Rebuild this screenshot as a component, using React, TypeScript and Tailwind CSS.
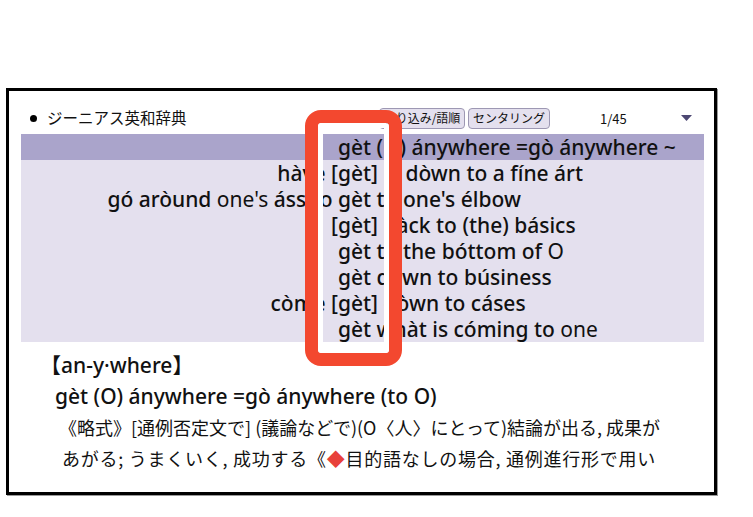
import React from "react";

const FONT = "font-['Noto_Sans','Noto_Sans_CJK_JP',sans-serif]";
const JP = "font-['Noto_Sans_CJK_JP',sans-serif]";

type Row = { left: React.ReactNode; right: React.ReactNode; hi?: boolean };

const rows: Row[] = [
  { left: "", right: "gèt (O) ánywhere =gò ánywhere ~", hi: true },
  { left: "hàve [", right: "gèt] O dòwn to a fíne árt" },
  {
    left: (
      <>
        gó aròund <span className="font-normal">one's</span> áss to{" "}
      </>
    ),
    right: "gèt to one's élbow",
  },
  { left: "[", right: "gèt] bàck to (the) básics" },
  {
    left: "",
    right: (
      <>
        gèt to the bóttom of <span className="font-normal">O</span>
      </>
    ),
  },
  { left: "", right: "gèt dòwn to búsiness" },
  { left: "còme [", right: "gèt] dòwn to cáses" },
  {
    left: "",
    right: (
      <>
        gèt whàt is cóming to <span className="font-normal">one</span>
      </>
    ),
  },
];

export default function App() {
  return (
    <div className={`relative w-[753px] h-[517px] bg-white text-[#111] ${FONT}`}>
      <div className="pt-[88px] pl-[6px]">
        <div className="w-[711px] h-[407px] border-[3px] border-black shadow-[1px_1px_0_#9a9a9a] flex flex-col">
          {/* header */}
          <div className={`h-[43px] pt-[11px] flex items-center ${JP}`}>
            <div className="w-[370px] flex items-center pl-[21px]">
              <span className="w-[7px] h-[7px] rounded-full bg-black"></span>
              <span className="ml-[10px] text-[15.5px] leading-none whitespace-nowrap">ジーニアス英和辞典</span>
            </div>
            <div className="h-[21px] w-[86px] rounded-[4px] border border-[#9d98b3] bg-[#e4e0ee] flex items-center justify-center text-[12px] leading-none whitespace-nowrap">
              絞り込み/語順
            </div>
            <div className="ml-[3px] h-[21px] w-[82px] rounded-[4px] border border-[#9d98b3] bg-[#e4e0ee] flex items-center justify-center text-[12px] leading-none whitespace-nowrap">
              センタリング
            </div>
            <div className="ml-[50px] text-[13px] leading-none">1/45</div>
            <svg className="ml-[54px]" width="11" height="7" viewBox="0 0 11 7">
              <polygon points="0,0 11,0 5.5,6" fill="#4d4873" />
            </svg>
          </div>
          {/* list */}
          <div className="ml-[12px] mr-[10px] bg-[#e4e0ee] text-[21px] font-medium">
            {rows.map((r, i) => (
              <div
                key={i}
                className={`h-[26px] flex items-center whitespace-nowrap leading-none ${r.hi ? "bg-[#aaa4cb]" : ""}`}
              >
                <div className="w-[317px] shrink-0 text-right whitespace-pre">{r.left}</div>
                <div className="whitespace-pre">{r.right}</div>
              </div>
            ))}
          </div>
          {/* entry */}
          <div className="pt-[8px] text-[21px] leading-[31px]">
            <div className="pl-[31px] font-medium">【an-y·where】</div>
            <div className="pl-[46px] font-medium">gèt (O) ánywhere =gò ánywhere (to O)</div>
            <div className={`pl-[50px] text-[18px] ${JP}`}>《略式》[通例否定文で] (議論などで)(O〈人〉にとって)結論が出る, 成果が</div>
            <div className={`pl-[53px] text-[18px] tracking-[0.75px] ${JP}`}>
              あがる; うまくいく, 成功する《<span className="text-[#e8413a]">◆</span>目的語なしの場合, 通例進行形で用い
            </div>
          </div>
        </div>
      </div>
      {/* red highlight frame */}
      <div className="absolute left-[305px] top-[110px] w-[97px] h-[256px] rounded-[16px] border-[13px] border-[#f3482f]">
        <div className="w-full h-full rounded-[4px] border-[5px] border-white"></div>
      </div>
    </div>
  );
}
